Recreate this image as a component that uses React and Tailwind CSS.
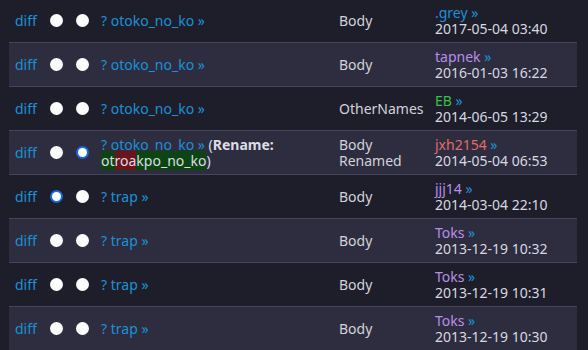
import React from "react";

const rows = [
  { name: "otoko_no_ko", type: ["Body"], user: ".grey", userColor: "text-[#1a92d6]", date: "2017-05-04 03:40", a: false, b: false },
  { name: "otoko_no_ko", type: ["Body"], user: "tapnek", userColor: "text-[#b98ee6]", date: "2016-01-03 16:22", a: false, b: false },
  { name: "otoko_no_ko", type: ["OtherNames"], user: "EB", userColor: "text-[#3cbf4a]", date: "2014-06-05 13:29", a: false, b: false },
  { name: "otoko_no_ko", type: ["Body", "Renamed"], user: "jxh2154", userColor: "text-[#e06b6e]", date: "2014-05-04 06:53", a: false, b: true, rename: true },
  { name: "trap", type: ["Body"], user: "jjj14", userColor: "text-[#b98ee6]", date: "2014-03-04 22:10", a: true, b: false },
  { name: "trap", type: ["Body"], user: "Toks", userColor: "text-[#b98ee6]", date: "2013-12-19 10:32", a: false, b: false },
  { name: "trap", type: ["Body"], user: "Toks", userColor: "text-[#b98ee6]", date: "2013-12-19 10:31", a: false, b: false },
  { name: "trap", type: ["Body"], user: "Toks", userColor: "text-[#b98ee6]", date: "2013-12-19 10:30", a: false, b: false },
];

function Radio({ checked }) {
  return checked ? (
    <span className="block w-[13px] h-[13px] rounded-full bg-[#1668e3] p-[2px]">
      <span className="block w-full h-full rounded-full bg-white" />
    </span>
  ) : (
    <span className="block w-[13px] h-[13px] rounded-full bg-white" />
  );
}

export default function App() {
  return (
    <div
      className="w-[588px] h-[350px] overflow-hidden bg-[#1e1e2b] text-[14px] leading-[16px]"
      style={{ fontFamily: '"Noto Sans", "Open Sans", sans-serif' }}
    >
      <div className="ml-[9px] w-[568px] mt-[-2px]">
        {rows.map((r, i) => (
          <div
            key={i}
            className={`flex items-center h-[44px] border-t border-[#44445a] ${
              i % 2 === 1 ? "bg-[#2d2d3f]" : "bg-[#1e1e2b]"
            }`}
          >
            <div className="w-[34px] pl-[6px] text-[#1a92d6]">diff</div>
            <div className="w-[26px] flex justify-center">
              <Radio checked={r.a} />
            </div>
            <div className="w-[26px] flex justify-center">
              <Radio checked={r.b} />
            </div>
            <div className="w-[238px] pl-[6px]">
              <span className="text-[#1a92d6]">? {r.name} »</span>
              {r.rename && (
                <span className="text-[#dcdce4]">
                  {" "}
                  (<span className="font-bold">Rename:</span>
                  <br />
                  <span className="bg-[#0b4512]">ot</span>
                  <span className="bg-[#6b1419]">roa</span>
                  <span className="bg-[#0b4512]">kpo_no_ko</span>)
                </span>
              )}
            </div>
            <div className="w-[96px] pl-[6px] text-[#d2d2da]">
              {r.type.map((t) => (
                <div key={t}>{t}</div>
              ))}
            </div>
            <div className="w-[148px] pl-[6px]">
              <div>
                <span className={r.userColor}>{r.user}</span>{" "}
                <span className="text-[#1a92d6]">»</span>
              </div>
              <div className="text-[#d8d8e0]">{r.date}</div>
            </div>
          </div>
        ))}
      </div>
    </div>
  );
}
